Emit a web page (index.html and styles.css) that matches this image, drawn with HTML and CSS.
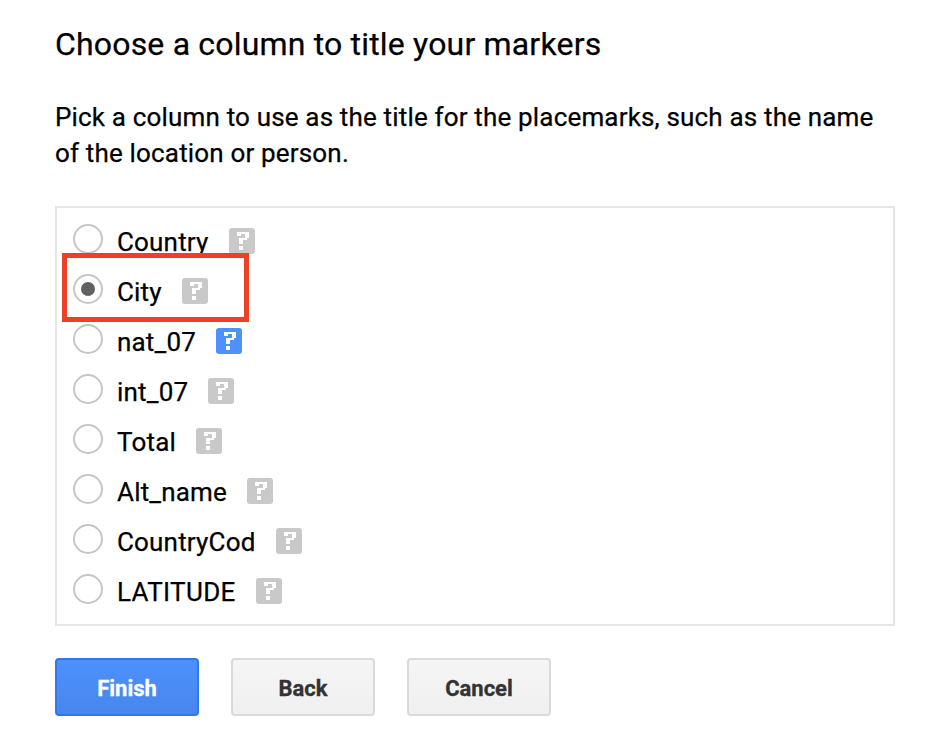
FILE: index.html
```html
<!DOCTYPE html>
<html lang="en">
<head>
<meta charset="utf-8">
<title>Choose a column to title your markers</title>
<link rel="stylesheet" href="styles.css">
</head>
<body>
<svg width="0" height="0" class="defs">
  <symbol id="help" viewBox="0 0 13 13" shape-rendering="crispEdges">
    <path d="M4 2h6v3h-1v1h-2v2h-2v-3h3v-2h-2v1h-2zM5 9h2v2h-2z"/>
  </symbol>
</svg>
<main class="dialog">
  <h1 class="title">Choose a column to title your markers</h1>
  <p class="description">Pick a column to use as the title for the placemarks, such as the name of the location or person.</p>
  <div class="columns">
    <label class="option"><span class="radio"></span><span class="name">Country</span><svg class="help"><use href="#help"/></svg></label>
    <label class="option"><span class="radio checked"></span><span class="name">City</span><svg class="help"><use href="#help"/></svg><span class="highlight"></span></label>
    <label class="option"><span class="radio"></span><span class="name">nat_07</span><svg class="help active"><use href="#help"/></svg></label>
    <label class="option"><span class="radio"></span><span class="name">int_07</span><svg class="help"><use href="#help"/></svg></label>
    <label class="option"><span class="radio"></span><span class="name">Total</span><svg class="help"><use href="#help"/></svg></label>
    <label class="option"><span class="radio"></span><span class="name">Alt_name</span><svg class="help"><use href="#help"/></svg></label>
    <label class="option"><span class="radio"></span><span class="name">CountryCod</span><svg class="help"><use href="#help"/></svg></label>
    <label class="option"><span class="radio"></span><span class="name caps">LATITUDE</span><svg class="help"><use href="#help"/></svg></label>
  </div>
  <div class="actions">
    <button class="button primary">Finish</button>
    <button class="button">Back</button>
    <button class="button">Cancel</button>
  </div>
</main>
</body>
</html>
```
FILE: styles.css
```css
* { box-sizing: border-box; }
body {
  margin: 0;
  background: #fff;
  color: #000;
  font-family: Roboto, "Liberation Sans", sans-serif;
}
.defs { display: block; }
.dialog { width: 840px; margin-left: 55px; padding-top: 20px; }
.title, .description, .name { letter-spacing: 0.18px; -webkit-text-stroke: 0.25px #000; }
.title { margin: 0; font-size: 32px; line-height: 48px; font-weight: 400; white-space: nowrap; }
.description { margin: 31px 0 35px; padding-right: 16px; font-size: 26px; line-height: 36px; letter-spacing: 0.17px; }
.columns { height: 420px; padding: 8px 16px; border: 2px solid #e5e5e5; }
.option { position: relative; display: flex; align-items: center; height: 50px; }
.radio {
  flex: none;
  display: flex;
  align-items: center;
  justify-content: center;
  width: 30px;
  height: 30px;
  margin-bottom: 4px;
  border: 2px solid #c6c6c6;
  border-radius: 50%;
}
.checked::after { content: ""; width: 14px; height: 14px; border-radius: 50%; background: #616161; }
.name { margin: 2px 20px 0 14px; font-size: 26px; line-height: 36px; }
.name.caps { letter-spacing: 0.33px; }
.help { flex: none; width: 26px; height: 26px; border-radius: 3px; background: #c9c9c9; fill: #fff; }
.help.active { background: #4d90fe; }
.highlight {
  position: absolute;
  left: -11px;
  top: -13px;
  width: 187px;
  height: 69px;
  border: 5px solid #ee4026;
}
.actions { display: flex; gap: 32px; margin-top: 32px; }
.button {
  width: 144px;
  height: 58px;
  padding: 4px 0 0;
  border: 2px solid #dadada;
  border-radius: 4px;
  background: linear-gradient(#f5f5f5, #f0f0f0);
  color: #333;
  font: bold 22px/32px Roboto, "Liberation Sans", sans-serif;
  -webkit-text-stroke: 0.3px currentColor;
}
.primary { border-color: #3079ed; background: linear-gradient(#4d90fe, #4787ed); color: #fff; }
```
